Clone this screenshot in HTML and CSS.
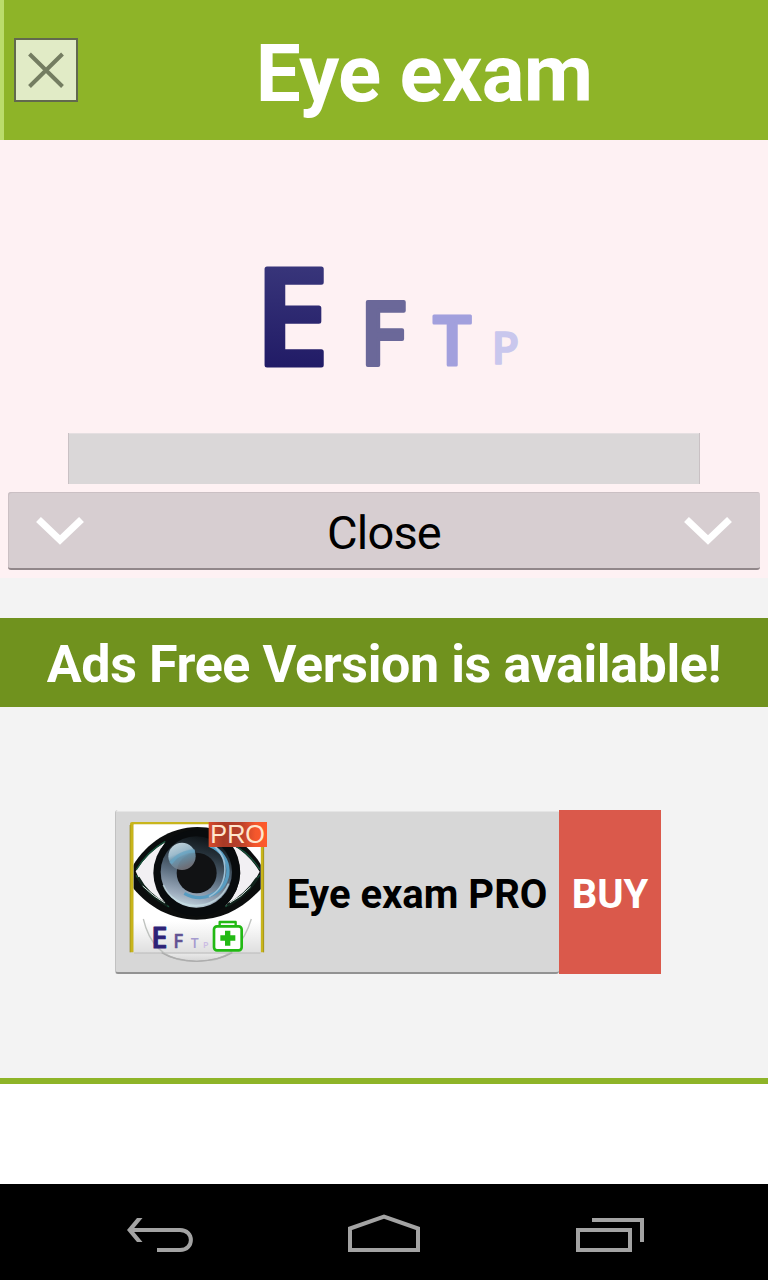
FILE: index.html
```html
<!DOCTYPE html>
<html lang="en">
<head>
<meta charset="utf-8">
<title>Eye exam</title>
<link rel="stylesheet" href="styles.css">
</head>
<body>
<header class="header">
  <button class="close-box" aria-label="Dismiss">
    <svg width="60" height="60" viewBox="0 0 60 60"><path d="M13.500 14L46.500 46.500M46.500 14L13.500 46.500" fill="none" stroke="#747d61" stroke-width="4"/></svg>
  </button>
  <h1 class="title">Eye exam</h1>
</header>
<main>
  <section class="exam">
    <svg class="chart" width="270" height="180" viewBox="255 215 270 180">
      <defs><linearGradient id="ink" gradientUnits="userSpaceOnUse" x1="290" y1="266" x2="285" y2="367"><stop offset="0" stop-color="#38357a"/><stop offset="1" stop-color="#211b66"/></linearGradient></defs>
      <g class="chart-letters">
        <text x="254.500" y="364.500" font-size="134" fill="url(#ink)" stroke="url(#ink)" stroke-width="5">E</text>
        <text x="359.500" y="364.500" font-size="89" fill="#6b6899" stroke="#6b6899" stroke-width="4">F</text>
        <text x="433" y="364.500" font-size="68" fill="#a2a0dd" stroke="#a2a0dd" stroke-width="3">T</text>
        <text x="491.500" y="364" font-size="45" fill="#c9c7ed" stroke="#c9c7ed" stroke-width="1.500">P</text>
      </g>
    </svg>
    <div class="blank-button"></div>
    <button class="close-button">
      <svg class="chevron" width="48" height="28" viewBox="0 0 48 28"><path d="M2.500 2.500L24 23L45.500 2.500" fill="none" stroke="#fff" stroke-width="7"/></svg>
      <span class="close-label">Close</span>
      <svg class="chevron" width="48" height="28" viewBox="0 0 48 28"><path d="M2.500 2.500L24 23L45.500 2.500" fill="none" stroke="#fff" stroke-width="7"/></svg>
    </button>
  </section>
  <h2 class="banner"><span class="banner-text">Ads Free Version is available!</span></h2>
  <section class="promo">
    <div class="offer">
      <svg class="app-icon" width="144" height="144" viewBox="51 60 432 432">
        <defs>
          <linearGradient id="paper" x1="0" y1="0" x2="0" y2="1"><stop offset="0.75" stop-color="#fff"/><stop offset="1" stop-color="#dedede"/></linearGradient>
          <linearGradient id="iris" x1="0.65" y1="0" x2="0.4" y2="1"><stop offset="0" stop-color="#0d1215"/><stop offset="0.25" stop-color="#27333c"/><stop offset="0.55" stop-color="#596b7d"/><stop offset="0.85" stop-color="#9dacbd"/><stop offset="1" stop-color="#c3d7e0"/></linearGradient>
          <linearGradient id="shine" x1="0" y1="0" x2="0.4" y2="1"><stop offset="0" stop-color="#e0edf3"/><stop offset="0.45" stop-color="#a8c8da"/><stop offset="0.62" stop-color="#6e9db7"/><stop offset="1" stop-color="#777982"/></linearGradient>
          <linearGradient id="lens" x1="0" y1="0" x2="0" y2="1"><stop offset="0" stop-color="#ececec"/><stop offset="1" stop-color="#d5d5d5"/></linearGradient>
          <linearGradient id="tag" x1="0" y1="0" x2="1" y2="0"><stop offset="0" stop-color="#d94b2c"/><stop offset="0.25" stop-color="#a83a26"/><stop offset="0.55" stop-color="#b8402a"/><stop offset="0.8" stop-color="#f4572c"/><stop offset="1" stop-color="#ff5a2b"/></linearGradient>
          <clipPath id="tile"><rect x="71" y="71" width="381" height="387"/></clipPath>
        </defs>
        <path d="M155 457Q193 483 260 484Q329 482 367 457Z" fill="url(#lens)" stroke="#aaa" stroke-width="3"/>
        <path d="M60 457V71Q60 66 66 66H462V457H452V74H71V457Z" fill="#c8b51b"/>
        <path d="M60 75V457M461 75V457" stroke="#8f841c" stroke-width="2"/>
        <rect x="71" y="73" width="381" height="387" fill="url(#paper)"/>
        <path d="M72 459H452" stroke="#bababa" stroke-width="3"/>
        <g clip-path="url(#tile)">
          <path d="M64 205C105 132 175 82 262 81C349 82 414 129 460 205V259C401 325 338 359 260 359C178 359 112 318 64 258Z" fill="#0b0d0d"/>
          <path d="M77 214Q112 158 166 126Q137 169 136 216Q136 268 177 318Q103 279 77 214Z" fill="#f2f0f3"/>
          <path d="M449 215Q417 162 363 132Q390 167 391 220Q389 274 345 319Q414 284 449 215Z" fill="#f2f0f3"/>
          <path d="M79 209Q112 154 166 124M78 226Q112 287 178 321M449 225Q409 287 346 320M366 133Q415 155 449 208" fill="none" stroke="#17533b" stroke-width="4"/>
          <path d="M84 232Q110 282 172 316M442 234Q409 286 352 316" fill="none" stroke="#10221b" stroke-width="9"/>
          <path d="M98 258Q132 291 165 309M422 260Q394 291 360 308" fill="none" stroke="#dceae4" stroke-width="3"/>
        </g>
        <circle cx="260" cy="219" r="130" fill="#080b0d"/>
        <circle cx="259" cy="216" r="107" fill="url(#iris)"/>
        <path d="M300 137C371 166 372 257 302 286C276 297 248 294 223 280" fill="none" stroke="#579cc1" stroke-width="10"/>
        <path d="M313 138C363 182 351 264 297 290" fill="none" stroke="#9bbfd5" stroke-width="5"/>
        <path d="M160 255C190 332 318 344 356 251" fill="none" stroke="#c9e1e7" stroke-width="5" opacity=".7"/>
        <ellipse cx="260" cy="219" rx="60" ry="61" fill="#111214"/>
        <circle cx="216" cy="169" r="41" fill="url(#shine)" opacity=".9"/>
        <path d="M182 190Q207 154 255 153" fill="none" stroke="#66a5c4" stroke-width="9" opacity=".7"/>
        <path d="M100 357Q126 468 224 482M424 357Q391 466 301 482" fill="none" stroke="#c0c3c0" stroke-width="4"/>
        <path d="M155 458Q193 482 260 484Q329 481 367 458" fill="none" stroke="#adadad" stroke-width="4"/>
        <g class="chart-letters">
          <text x="124" y="445" font-size="87" fill="#2d2277" stroke="#2d2277" stroke-width="3">E</text>
          <text x="190" y="444" font-size="57" fill="#625393" stroke="#625393" stroke-width="1">F</text>
          <text x="242" y="444" font-size="42" fill="#a59bcf">T</text>
          <text x="279" y="444" font-size="27" fill="#cbbce3">P</text>
        </g>
        <rect x="312" y="379" width="83" height="72" rx="9" fill="#fff" stroke="#22b914" stroke-width="8"/>
        <path d="M329 378V366H377V378" fill="none" stroke="#22b914" stroke-width="7" stroke-linejoin="round"/>
        <path d="M353 392V437M331 414H376" stroke="#22b914" stroke-width="16"/>
        <rect x="296" y="66" width="175" height="75" fill="url(#tag)"/>
        <text class="pro-label" x="301" y="130" font-size="75" textLength="164" lengthAdjust="spacingAndGlyphs">PRO</text>
      </svg>
      <span class="offer-name">Eye exam PRO</span>
    </div>
    <button class="buy">BUY</button>
  </section>
</main>
<nav class="nav">
  <svg width="768" height="96" viewBox="0 1184 768 96" fill="none" stroke="#a3a3a3" stroke-width="4">
    <path d="M131 1230H180C194.500 1230 194.500 1250 180 1250H157"/>
    <path d="M127 1230L137 1218H142.500L132.500 1230L142.500 1242H137Z" fill="#a3a3a3" stroke="none"/>
    <path d="M350 1250V1228.500L384 1216.500L418 1228.500V1250Z"/>
    <path d="M578 1230H630V1250H578ZM592 1220H642V1242"/>
  </svg>
</nav>
</body>
</html>
```

FILE: styles.css
```css
* { box-sizing: border-box; }
body { margin: 0; width: 768px; height: 1280px; display: flex; flex-direction: column; background: #fff; font-family: Roboto, sans-serif; overflow: hidden; }
button { font: inherit; border: 0; padding: 0; margin: 0; }
svg { display: block; flex: none; }
.header { height: 140px; display: flex; align-items: center; background: #8eb428; border-left: 4px solid #bbdc6b; padding-left: 10px; }
.close-box { width: 64px; height: 64px; border: 2px solid #62694e; background: #e1ebc6; flex: none; }
.title { flex: 1; margin: 7px 0 0 2px; text-align: center; color: #fff; font-size: 80px; line-height: 94px; font-weight: 700; letter-spacing: -0.8px; }
.exam { height: 438px; background: #fef1f3; padding: 75px 8px 0; display: flex; flex-direction: column; align-items: center; }
.chart { margin-left: 12px; overflow: visible; }
.chart-letters { font-family: "Open Sans", sans-serif; font-weight: 600; stroke-linejoin: round; }
.blank-button { width: 632px; height: 51px; margin-top: 38px; background: #dad7d8; border: solid #c9c1c4; border-width: 0 1px; box-shadow: inset 0 1px #e5dfe1; }
.close-button { width: 752px; height: 78px; margin-top: 8px; padding: 0 28px; display: flex; align-items: center; justify-content: space-between; background: #d7ced1; border-radius: 3px; border-bottom: 2px solid #91878a; box-shadow: inset 1px 1px #cbc0c4; color: #000; }
.chevron { margin-top: 2px; }
.close-label { font-size: 47px; line-height: 56px; padding-top: 6px; letter-spacing: -0.8px; }
.banner { height: 89px; margin: 40px 0 0; display: flex; align-items: center; justify-content: center; background: #70921e; color: #fff; font-size: 52px; font-weight: 700; white-space: nowrap; letter-spacing: -0.4px; }
main { background: #f3f3f3; border-bottom: 6px solid #8eb428; height: 944px; }
.banner-text { padding-top: 3px; }
.promo { display: flex; padding: 103px 0 0 115px; }
.offer { width: 444px; height: 164px; padding: 10px 12px 0; display: flex; background: linear-gradient(#f3f3f3 1px, #d7d7d7 2px); border-left: 1px solid #c1c1c1; border-bottom: 2px solid #929292; border-radius: 3px; }
.app-icon { margin-left: -1px; overflow: visible; }
.offer-name { margin: 51px 0 0 16px; font-size: 40px; line-height: 48px; font-weight: 700; white-space: nowrap; }
.buy { width: 102px; height: 164px; padding-top: 4px; background: #da594b; color: #fff; font-size: 40px; font-weight: 700; }
.pro-label { font-family: "Liberation Sans", sans-serif; fill: #ffe5cc; }
.nav { margin-top: 100px; height: 96px; background: #000; }
```
